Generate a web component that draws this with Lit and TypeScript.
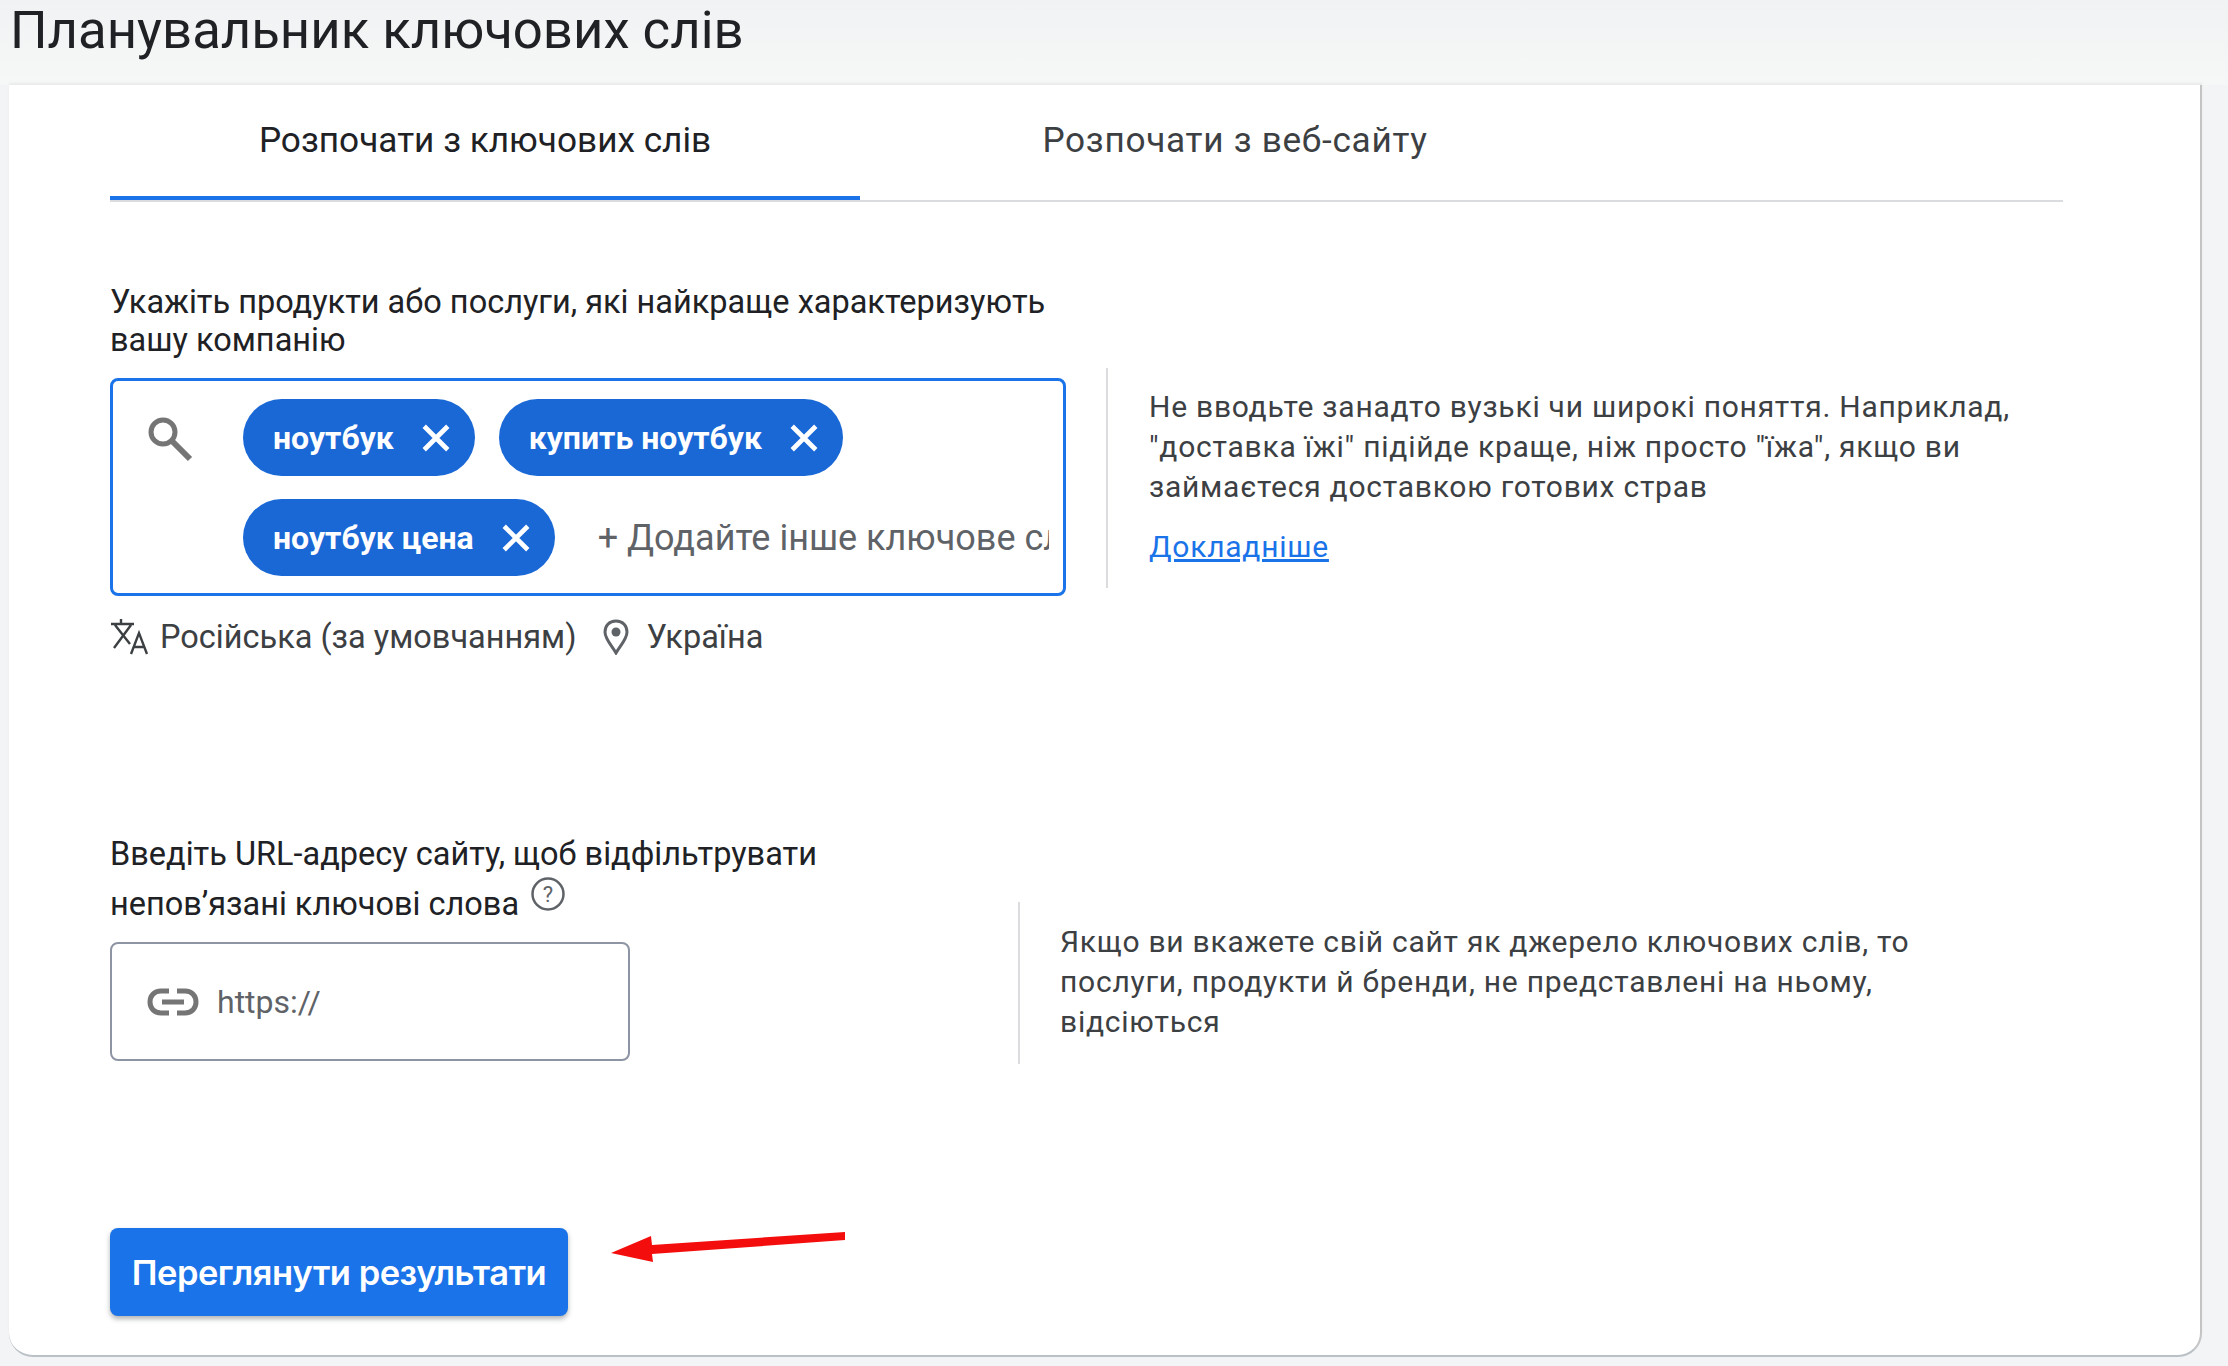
import { LitElement, html, css } from "lit";
import { customElement } from "lit/decorators.js";

const closeIcon = html`<svg class="x" viewBox="0 0 28 28"><path d="M3 3 25 25M25 3 3 25" fill="none" stroke="#fff" stroke-width="4.4"/></svg>`;

@customElement("app-root")
export class AppRoot extends LitElement {
  static styles = css`
    :host { display: block; width: 2228px; height: 1366px; overflow: hidden; background: #f3f4f5; font-family: Roboto, "Noto Sans", sans-serif; color: #202124; position: relative; }
    .head { height: 85px; box-sizing: border-box; padding-left: 10px; background: linear-gradient(#f1f2f3, #f6f7f7); }
    h1 { margin: 0; font-size: 52.7px; font-weight: 400; line-height: 60px; }
    .card { width: 2193px; height: 1272px; margin-left: 9px; box-sizing: border-box; background: #fff; border-radius: 0 0 24px 24px; border-right: 2px solid #c4c4c4; border-bottom: 2px solid #b9c0c6; padding: 0 137px 0 101px; box-shadow: 0 -2px 2px #e9eaeb; }
    .tabs { display: grid; grid-template-columns: 750px 750px 1fr; height: 115px; border-bottom: 2px solid #dadce0; }
    .tab { display: flex; justify-content: center; padding-top: 35px; box-sizing: border-box; font-size: 35.2px; line-height: 40px; color: #3c4043; letter-spacing: .7px; }
    .tab.on { color: #202124; border-bottom: 4px solid #1a73e8; height: 115px; letter-spacing: 0; }
    .row { display: flex; }
    .kw { margin-top: 81px; height: 548px; }
    .left { width: 956px; }
    .label { font-size: 32.5px; line-height: 38px; margin: 0; color: #202124; }
    .box { margin-top: 19px; height: 218px; box-sizing: border-box; border: 3px solid #1a73e8; border-radius: 8px; display: flex; padding: 18px 14px 0 0; }
    .search { height: 46px; margin: 17px 0 0 34px; flex: none; width: 48px; }
    .chips { margin-left: 48px; display: flex; flex-wrap: wrap; column-gap: 24px; row-gap: 23px; align-content: flex-start; min-width: 0; flex: 1; }
    .chip { height: 77px; box-sizing: border-box; background: #1a68d6; color: #fff; border-radius: 39px; display: flex; align-items: center; padding: 0 24px 0 30px; font-size: 32px; font-weight: 700; gap: 27px; white-space: nowrap; }
    .x { width: 30px; height: 30px; display: block; }
    .ph { flex: 1; min-width: 0; overflow: hidden; white-space: nowrap; font-size: 36px; color: #5f6368; align-self: center; margin-left: 19px; }
    .meta { margin-top: 21px; display: flex; align-items: center; font-size: 32.5px; line-height: 40px; color: #3c4043; }
    .meta svg { display: block; flex: none; }
    .side { margin-left: 40px; margin-top: 85px; border-left: 2px solid #dadce0; padding-left: 41px; height: 220px; font-size: 30px; line-height: 40px; letter-spacing: .75px; color: #3c4043; box-sizing: border-box; padding-top: 19px; }
    .side p { margin: 0; }
    a { display: block; margin-top: 20px; color: #1a73e8; text-decoration: underline; }
    .url .left { width: 520px; }
    .label2 { font-size: 32.5px; line-height: 46px; margin: 0; white-space: nowrap; color: #202124; }
    .help { display: inline-block; width: 34px; height: 34px; vertical-align: 4px; margin-left: 12px; }
    .field { margin-top: 15px; height: 119px; box-sizing: border-box; border: 2px solid #8d94a3; border-radius: 8px; display: flex; align-items: center; padding-left: 35px; gap: 18px; font-size: 32px; color: #5f6368; }
    .side2 { margin-left: 388px; margin-top: 71px; height: 162px; padding-top: 20px; padding-left: 40px; }
    .btn { margin-top: 164px; width: 458px; height: 88px; border: 0; border-radius: 8px; background: #1a73e8; color: #fff; font: 600 34.500px Inter, Roboto, sans-serif; letter-spacing: -.5px; box-shadow: 0 3px 5px rgba(60,64,67,.4); display: block; padding: 0; }
    .arrow { position: absolute; left: 605px; top: 1225px; width: 245px; height: 40px; }
  `;
  render() {
    return html`
      <div class="head"><h1>Планувальник ключових слів</h1></div>
      <main class="card">
        <div class="tabs">
          <div class="tab on">Розпочати з ключових слів</div>
          <div class="tab">Розпочати з веб-сайту</div>
        </div>
        <section class="row kw">
          <div class="left">
            <p class="label">Укажіть продукти або послуги, які найкраще характеризують вашу компанію</p>
            <div class="box">
              <svg class="search" viewBox="0 0 48 46"><circle cx="16" cy="16" r="12" fill="none" stroke="#757575" stroke-width="5"/><path d="M25 25 43 43" stroke="#757575" stroke-width="6" fill="none"/></svg>
              <div class="chips">
                <span class="chip">ноутбук ${closeIcon}</span>
                <span class="chip">купить ноутбук ${closeIcon}</span>
                <span class="chip">ноутбук цена ${closeIcon}</span>
                <span class="ph">+ Додайте інше ключове слово</span>
              </div>
            </div>
            <div class="meta">
              <svg width="38" height="38" viewBox="0 0 38 38" fill="none" stroke="#3c4043" stroke-width="2.4"><path d="M1 6H24M11 1V6M4 30 21 7M5 7 20 26"/><path d="M21 36 29 15 37 36M24 29H34"/></svg>
              <span style="margin-left:12px">Російська (за умовчанням)</span>
              <svg style="margin-left:26px" width="26" height="36" viewBox="0 0 26 36"><path d="M13 2C6 2 2 7 2 13c0 7 7 14 11 21 4-7 11-14 11-21C24 7 20 2 13 2Z" fill="none" stroke="#5f6368" stroke-width="3"/><circle cx="13" cy="13" r="4.500" fill="#5f6368"/></svg>
              <span style="margin-left:18px">Україна</span>
            </div>
          </div>
          <div class="side">
            <p>Не вводьте занадто вузькі чи широкі поняття. Наприклад,<br>"доставка їжі" підійде краще, ніж просто "їжа", якщо ви<br>займаєтеся доставкою готових страв</p>
            <a href="#">Докладніше</a>
          </div>
        </section>
        <section class="row url">
          <div class="left">
            <p class="label2">Введіть URL-адресу сайту, щоб відфільтрувати<br>непов’язані ключові слова<svg class="help" viewBox="0 0 34 34"><circle cx="17" cy="17" r="15.500" fill="none" stroke="#5f6368" stroke-width="2.500"/><text x="17" y="25" text-anchor="middle" font-size="22" font-family="Roboto" fill="#5f6368">?</text></svg></p>
            <div class="field">
              <svg width="52" height="28" viewBox="0 0 52 28" fill="none" stroke="#757575" stroke-width="5"><path d="M22 3H14C7 3 3 8 3 14s4 11 11 11h8M30 3h8c7 0 11 5 11 11s-4 11-11 11h-8M15 14h22"/></svg>
              <span>https://</span>
            </div>
          </div>
          <div class="side side2">
            <p>Якщо ви вкажете свій сайт як джерело ключових слів, то<br>послуги, продукти й бренди, не представлені на ньому,<br>відсіються</p>
          </div>
        </section>
        <button class="btn">Переглянути результати</button>
      </main>
      <svg class="arrow" viewBox="0 0 245 40"><path d="M240 7 47 20 46 11 6 28 48 37 47 29 240 15Z" fill="#f40d0d"/></svg>
    `;
  }
}
